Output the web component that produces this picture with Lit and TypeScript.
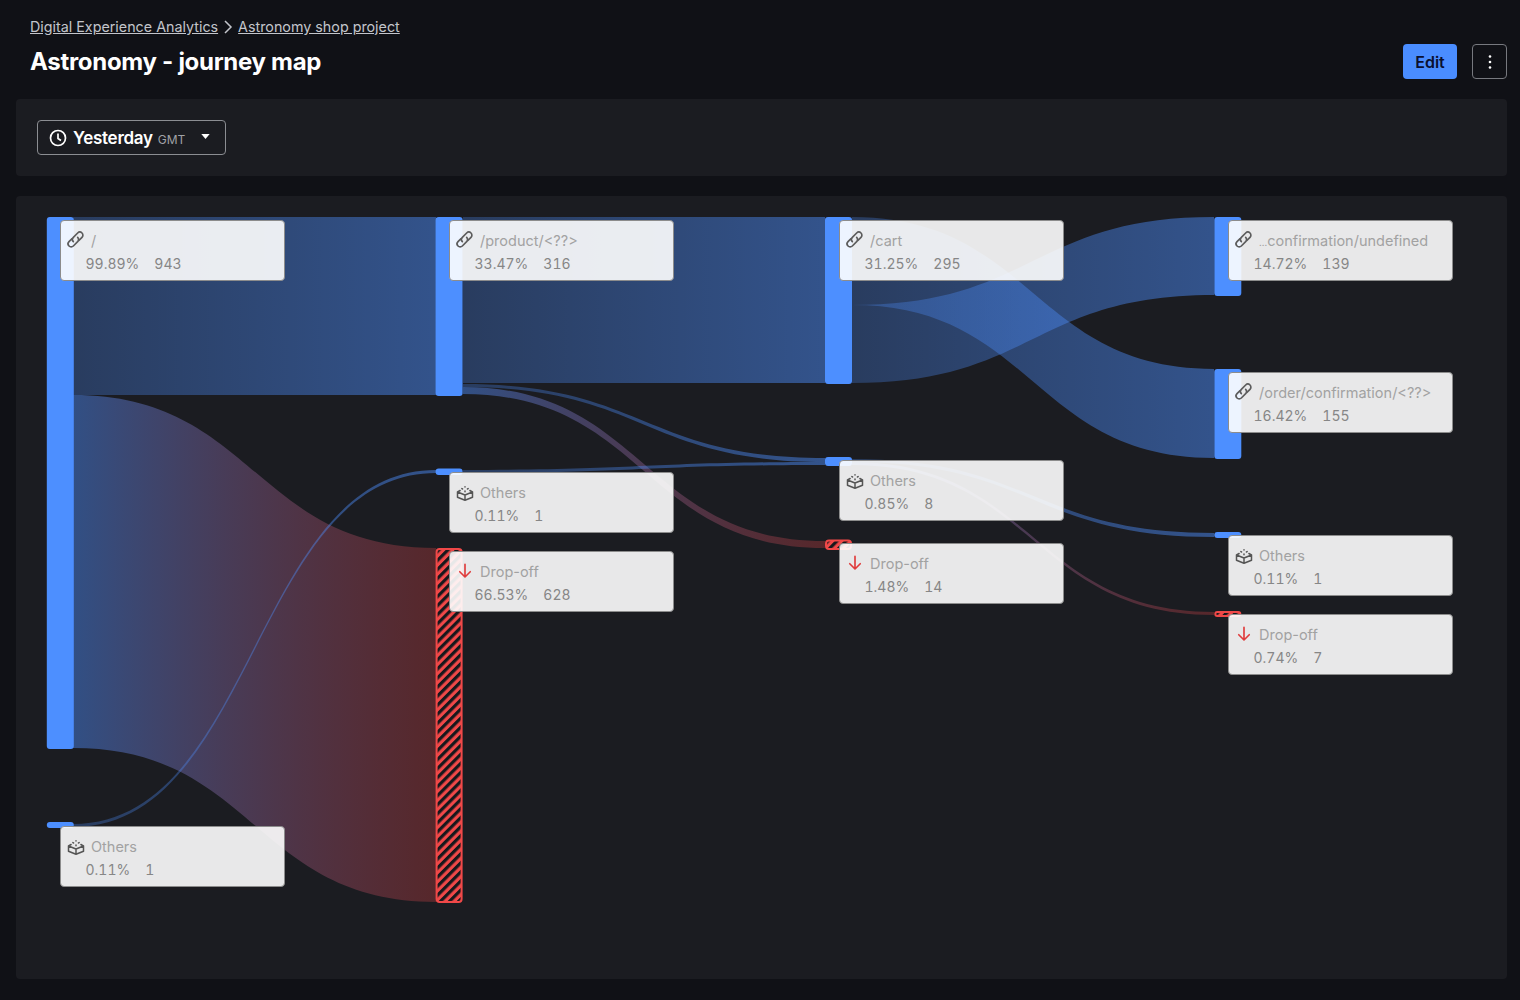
import { LitElement, html, css, svg } from "lit";
import { customElement } from "lit/decorators.js";

type Kind = "link" | "box" | "drop";
interface Card { x: number; y: number; kind: Kind; label: string; pct: string; count: string; }
interface Bar { x: number; y0: number; y1: number; hatch?: boolean; }

const CARDS: Card[] = [
  { x: 60, y: 221, kind: "link", label: "/", pct: "99.89%", count: "943" },
  { x: 449, y: 221, kind: "link", label: "/product/<??>", pct: "33.47%", count: "316" },
  { x: 839, y: 221, kind: "link", label: "/cart", pct: "31.25%", count: "295" },
  { x: 1228, y: 221, kind: "link", label: "…confirmation/undefined", pct: "14.72%", count: "139" },
  { x: 1228, y: 373, kind: "link", label: "/order/confirmation/<??>", pct: "16.42%", count: "155" },
  { x: 449, y: 473, kind: "box", label: "Others", pct: "0.11%", count: "1" },
  { x: 449, y: 552, kind: "drop", label: "Drop-off", pct: "66.53%", count: "628" },
  { x: 839, y: 461, kind: "box", label: "Others", pct: "0.85%", count: "8" },
  { x: 839, y: 544, kind: "drop", label: "Drop-off", pct: "1.48%", count: "14" },
  { x: 1228, y: 536, kind: "box", label: "Others", pct: "0.11%", count: "1" },
  { x: 1228, y: 615, kind: "drop", label: "Drop-off", pct: "0.74%", count: "7" },
  { x: 60, y: 827, kind: "box", label: "Others", pct: "0.11%", count: "1" },
];

const BARS: Bar[] = [
  { x: 46.8, y0: 217, y1: 749 },
  { x: 46.8, y0: 822, y1: 828 },
  { x: 435.6, y0: 217, y1: 396 },
  { x: 435.6, y0: 468.5, y1: 475 },
  { x: 435.6, y0: 548, y1: 903, hatch: true },
  { x: 825, y0: 217, y1: 384 },
  { x: 825, y0: 457, y1: 466 },
  { x: 825, y0: 539.5, y1: 550, hatch: true },
  { x: 1214.3, y0: 217, y1: 296 },
  { x: 1214.3, y0: 369, y1: 459 },
  { x: 1214.3, y0: 532, y1: 538 },
  { x: 1214.3, y0: 611, y1: 617, hatch: true },
];

// x0, top0, bot0, x1, top1, bot1, paint
const LINKS: [number, number, number, number, number, number, string][] = [
  [73, 217, 395, 436, 217, 395, "blue"],
  [73, 395, 748, 436, 548, 902, "mix"],
  [73, 824, 827, 436, 470, 473, "blue"],
  [463, 217, 383, 825, 217, 383, "blue"],
  [463, 384, 387, 825, 458, 462, "blue"],
  [463, 387, 394, 825, 541, 548, "mix"],
  [463, 470, 473, 825, 462, 465, "blue"],
  [852, 305, 383, 1214, 217, 295, "blue"],
  [852, 217, 305, 1214, 369, 458, "blue"],
  [852, 459, 462, 1214, 533, 537, "blue"],
  [852, 462, 465, 1214, 612, 615, "mix"],
];

const linkPath = ([x0, a0, b0, x1, a1, b1]: (typeof LINKS)[number]) => {
  const m = (x0 + x1) / 2;
  return `M${x0} ${a0}C${m} ${a0} ${m} ${a1} ${x1} ${a1}L${x1} ${b1}C${m} ${b1} ${m} ${b0} ${x0} ${b0}Z`;
};

const ICONS = {
  link: svg`<g transform="rotate(-45 12 12)"><path d="M10 8.500H5a3.500 3.500 0 0 0 0 7h7a3.500 3.500 0 0 0 3.500-3.500"/><path d="M14 15.500h5a3.500 3.500 0 0 0 0-7h-7a3.500 3.500 0 0 0-3.500 3.500"/></g>`,
  box: svg`<path d="M2 12v7l10 4 10-4v-7l-10 4zM12 16v7M2 12l3.500-2M22 12l-3.500-2"/><path d="M12 5v.2M7.800 7.500l1 .5M16.200 7.500l-1 .5M12 10.500v1"/>`,
  drop: svg`<path d="M12 3v17M5 13l7 7 7-7"/>`,
};

@customElement("app-root")
export class AppRoot extends LitElement {
  static styles = css`
    :host { display: block; background: #101116; min-height: 1000px; color: #fff; font-family: Inter, "Noto Sans", sans-serif; }
    .page { display: flex; flex-direction: column; gap: 20px; padding: 0 13px 21px 16px; }
    .head { display: flex; justify-content: space-between; align-items: flex-end; height: 79px; padding-left: 14px; }
    .titles { display: flex; flex-direction: column; gap: 9px; padding-bottom: 1px; }
    .crumbs { display: flex; align-items: center; gap: 4px; font-size: 14.3px; line-height: 20px; color: #c3c5cb; }
    .crumbs span { text-decoration: underline; }
    .crumbs svg { width: 12px; height: 16px; fill: none; stroke: #c3c5cb; stroke-width: 1.5; }
    h1 { margin: 0; font-size: 24px; line-height: 32px; font-weight: 700; letter-spacing: -0.3px; color: #fff; }
    .actions { display: flex; gap: 15px; }
    .edit, .more { height: 35px; box-sizing: border-box; border-radius: 4px; display: flex; align-items: center; justify-content: center; font: inherit; }
    .edit { width: 54px; border: 0; background: #4a8dff; color: #0a1030; font-size: 16px; font-weight: 600; }
    .more { width: 35px; background: transparent; border: 1px solid #77797f; padding: 0; }
    .more svg { width: 4px; height: 16px; fill: #fff; }
    .panel { background: #1b1c21; border-radius: 4px; }
    .toolbar { height: 77px; box-sizing: border-box; padding: 21px; }
    .range { width: 189px; height: 35px; box-sizing: border-box; display: flex; align-items: center; padding: 0 11px; border: 1px solid #8b8d92; border-radius: 4px; background: transparent; color: #fff; font: inherit; }
    .range .clock { width: 18px; height: 18px; fill: none; stroke: #fff; stroke-width: 1.7; margin-right: 6px; flex: none; }
    .range b { font-size: 17px; font-weight: 600; letter-spacing: -0.27px; }
    .range small { font-size: 12px; color: #a0a2a7; margin: 3px 0 0 5px; }
    .range .caret { width: 9px; height: 5px; fill: #fff; margin: -3px 4px 0 auto; }
    .chart { position: relative; height: 783px; overflow: hidden; }
    .chart > svg { display: block; width: 1491px; height: 783px; }
    .card { position: absolute; width: 225px; height: 61px; box-sizing: border-box; border: 1px solid #8c8c8c; border-radius: 4px; background: rgba(255,255,255,.9); }
    .card svg { position: absolute; left: 6px; top: 10px; width: 18px; height: 18px; fill: none; stroke: #555; stroke-width: 2; stroke-linecap: round; stroke-linejoin: round; }
    .card svg.link { left: 4px; top: 7.5px; width: 21px; height: 21px; stroke-width: 1.9; stroke: #5c5c5c; }
    .card svg.drop { stroke: #e03c3c; stroke-width: 2.2; }
    .label { position: absolute; left: 30px; right: 4px; top: 10px; font-size: 14.5px; line-height: 20px; color: #a2a2a2; white-space: nowrap; overflow: hidden; }
    .ell { font-size: 9.5px; }
    .stats { position: absolute; left: 24.5px; top: 33px; display: flex; gap: 15px; font-size: 14px; line-height: 20px; color: #868686; font-variant-numeric: tabular-nums; }
  `;

  private card(c: Card) {
    const ell = c.label.startsWith("…");
    return html`<div class="card" style="left:${c.x - 16}px;top:${c.y - 197}px">
      <svg class=${c.kind} viewBox="0 0 24 24">${ICONS[c.kind]}</svg>
      <div class="label">${ell ? html`<span class="ell">…</span>${c.label.slice(1)}` : c.label}</div>
      <div class="stats"><span>${c.pct}</span><span>${c.count}</span></div>
    </div>`;
  }

  render() {
    return html`<div class="page">
      <header class="head">
        <div class="titles">
          <nav class="crumbs"><span>Digital Experience Analytics</span>
            <svg viewBox="0 0 12 16"><path d="M3 2l6 6-6 6"/></svg>
            <span>Astronomy shop project</span></nav>
          <h1>Astronomy - journey map</h1>
        </div>
        <div class="actions">
          <button class="edit">Edit</button>
          <button class="more"><svg viewBox="0 0 4 16"><circle cx="2" cy="2.500" r="1.300"/><circle cx="2" cy="8" r="1.300"/><circle cx="2" cy="13.500" r="1.300"/></svg></button>
        </div>
      </header>
      <section class="panel toolbar">
        <button class="range">
          <svg class="clock" viewBox="0 0 18 18"><circle cx="9" cy="9" r="7.500"/><path d="M9 4.500V9.500l3 2"/></svg>
          <b>Yesterday</b><small>GMT</small>
          <svg class="caret" viewBox="0 0 10 6"><path d="M0 0h10L5 6z"/></svg>
        </button>
      </section>
      <section class="panel chart">
        <svg viewBox="16 196 1491 783">
          <defs>
            <linearGradient id="blue0" x1="0" x2="1" y1="0" y2="0">
              <stop offset="0" stop-color="#4d8fff" stop-opacity=".28"/>
              <stop offset="1" stop-color="#4d8fff" stop-opacity=".48"/>
            </linearGradient>
            <linearGradient id="mix0" x1="0" x2="1" y1="0" y2="0">
              <stop offset="0" stop-color="#4d8fff" stop-opacity=".45"/>
              <stop offset="1" stop-color="#f04545" stop-opacity=".28"/>
            </linearGradient>
            <pattern id="hatch" width="6.400" height="6.400" patternUnits="userSpaceOnUse" patternTransform="rotate(45)">
              <rect width="6.400" height="6.400" fill="#f04848"/>
              <rect width="3.200" height="6.400" fill="#17181c"/>
            </pattern>
          </defs>
          ${LINKS.map((l) => svg`<path d=${linkPath(l)} fill=${l[6] === "mix" ? "url(#mix0)" : "url(#blue0)"}/>`)}
          ${BARS.map((b) =>
            b.hatch
              ? svg`<rect x=${b.x + 1} y=${b.y0 + 1} width="25" height=${b.y1 - b.y0 - 2} rx=${Math.min(3, (b.y1 - b.y0 - 2) / 2)} fill="url(#hatch)" stroke="#f04848" stroke-width="2"/>`
              : svg`<rect x=${b.x} y=${b.y0} width="27" height=${b.y1 - b.y0} rx=${Math.min(3, (b.y1 - b.y0) / 2)} fill="#4d8fff"/>`
          )}
        </svg>
        ${CARDS.map((c) => this.card(c))}
      </section>
    </div>`;
  }
}
